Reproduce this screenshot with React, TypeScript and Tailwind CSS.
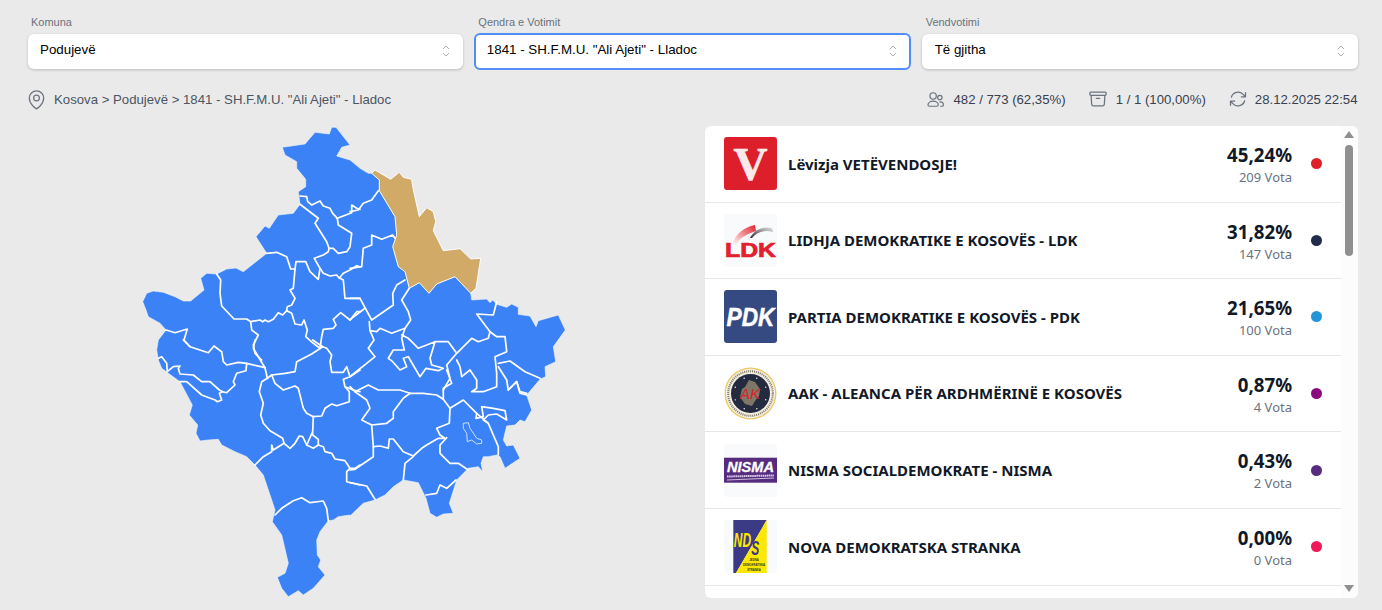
import React from "react";

type P = number[];
const z = (ox: number, oy: number, pts: P, close = false) => {
  let d = "";
  for (let i = 0; i < pts.length; i += 2) {
    const x = ox + pts[i] / 3 - 130;
    const y = oy + pts[i + 1] / 3 - 120;
    d += (i === 0 ? "M" : "L") + x.toFixed(1) + " " + y.toFixed(1) + " ";
  }
  return d + (close ? "Z" : "");
};
const Z3 = (p: P) => z(130, 120, p);
const Z4 = (p: P) => z(350, 160, p);
const Z5 = (p: P) => z(130, 340, p);
const Z6 = (p: P) => z(350, 340, p);

const outline =
  z(130, 120, [457,82,525,72,555,37,598,42,605,22,618,22,660,75,635,82,620,108,660,120,690,145]) +
  z(350, 160, [55,40,65,40,75,30,122,58,148,37,160,52,185,58,188,80,208,170,230,143,250,155,257,185,250,212,280,272,330,266,362,297,392,295,378,385,362,400,365,420,410,417,420,428,428,420,440,433,470,442,485,432,505,442,505,463,540,468,558,500,565,482,625,465,646,510,610,560,617,605,585,620,587,650,570,658,530,705]).replace("M", "L") +
  z(350, 340, [545,210,525,245,510,240,495,255,470,258,460,300,470,318,490,315,510,355,465,385,450,350,440,345,415,350,400,350,393,370,398,395,385,380,355,385,320,420,298,490,310,520,280,522,260,532,240,520,228,475,205,428,160,420,130,440,105,465,75,480,40,490,0,528]).replace("M", "L") +
  z(130, 340, [660,525,625,530,610,540,595,542,570,575,560,600,562,645,572,660,565,680,585,705,550,745,520,765,505,752,475,770,455,745,442,712,465,700,475,670,455,585,427,545,435,510,425,480,400,405,375,375,350,350,315,335,275,315,265,298,235,300,210,303,198,280,203,255,178,225,187,195,150,125,115,100,95,85,85,60,80,30,85,0]).replace("M", "L") +
  z(130, 120, [108,630,90,610,55,590,48,570,38,545,50,520,70,513,100,517,135,530,160,543,182,543,222,510,212,475,230,460,260,462,290,447,318,444,340,455,410,400,378,350,405,318,418,325,445,285,490,280,510,253,505,215,527,200,527,178,500,145,500,125,465,105]).replace("M", "L") +
  "Z";

const tan = z(350, 160, [65,40,75,30,122,58,148,37,160,52,185,58,188,80,208,170,230,143,250,155,257,185,250,212,280,272,330,266,362,297,392,295,378,385,362,400,315,350,260,372,237,400,208,368,178,385,165,335,145,320,128,260,140,225,135,170,88,92,88,60], true);

const borders: string[] = [
  Z3([510,228,530,230,533,245,545,255,570,243,580,258,600,265,608,280,622,295,665,278,665,255,680,265,690,268]),
  Z3([622,295,625,315,665,340,660,380,650,395,625,400,610,385,597,385]),
  Z3([510,253,565,295,555,310,590,365,597,385,595,395,580,405,553,415,570,445,580,460,600,468,620,465,628,475,640,460,660,450,680,437,690,440]),
  Z3([630,475,640,480,645,535,690,535]),
  Z3([410,400,440,397,470,410,482,447,495,447,498,425,527,425,540,455,565,478,570,445]),
  Z3([495,447,490,505,480,510,495,535,485,555,472,560,470,572]),
  Z3([260,462,272,480,270,520,275,558,312,597,350,597,362,605,390,600,398,605,405,600,415,605,430,598,445,578,458,585,470,572]),
  Z3([470,572,485,580,495,612,515,615,522,600,532,630,527,650,550,670,570,685]),
  Z3([570,685,575,650,580,628,610,625,618,615,610,598,632,578,660,600,680,575,690,575]),
  Z3([362,605,365,630,385,645,370,675,375,700,395,720]),
  Z3([108,630,135,638,172,627,162,660,180,680]),
  Z5([160,0,180,20,235,38,252,18,275,35,280,65,290,75,325,67,350,70,405,83,412,115]),
  Z5([350,70,348,92,320,100,310,125,315,135,290,158,278,155,268,150,240,125,215,125,190,105,150,102,145,85,150,78,130,80,112,95,110,70,95,50,85,55]),
  Z5([150,125,170,125,215,165,255,180,262,185,275,180,268,160,278,155]),
  Z5([375,0,370,25,385,50,405,83]),
  Z5([548,0,578,20,545,42,500,65,495,95,465,100,425,105,412,115,395,125,388,155,400,190,392,225,400,250,420,272,458,295,462,310,430,330,425,315,425,335,400,350,375,375]),
  Z5([425,105,435,130,460,150,495,138,505,145,520,205,530,220,550,230,575,228,585,205,605,192,620,197,658,185,658,155,645,140,640,118,660,110,650,80,640,97,605,97,600,65,605,45,590,25,578,20]),
  Z5([550,230,548,275,530,315,550,325,565,315,565,298,548,285,548,275]),
  Z5([462,310,480,325,495,310,508,288,518,290,530,315]),
  Z5([565,315,580,320,585,335,605,340,615,357,645,362,660,385,675,385,690,375]),
  Z5([660,385,650,395,650,425,690,435]),
  Z5([435,525,455,505,490,482,515,473,540,488,580,483,590,505,595,542]),
  Z5([645,140,670,150,690,155]),
  Z5([660,110,690,90]),
  Z4([0,155,25,150,40,130,65,120,85,92]),
  Z4([0,325,35,320,40,265,65,255,65,225,95,238,128,225,135,235]),
  Z4([0,415,30,415,65,480,130,435,128,400,140,375,165,360]),
  Z4([178,385,155,420,175,455,182,480,165,505,125,520,90,505,80,515,60,512,58,485]),
  Z4([45,445,5,475,0,480]),
  Z4([60,512,72,540,55,565,75,590,50,610,25,630,0,650]),
  Z4([165,505,155,535,163,570,130,570,115,595,128,605,150,630,170,620,160,595,175,590,210,650,228,625,265,632,280,625,245,615,240,595,255,545,205,565,185,545,175,535,155,525]),
  Z4([255,545,295,545,320,580,365,535,385,545,415,535,420,515,380,462,430,465,440,425]),
  Z4([320,600,330,620,335,650,360,630,380,660,380,685,365,695,400,695,440,680,440,640,435,590,470,575,465,530,440,530,420,515]),
  Z4([320,580,290,615,300,655,280,690]),
  Z4([445,610,480,603,525,635,570,655]),
  Z4([445,620,470,660,475,690,500,665,510,695,530,700]),
  Z6([0,140,15,155,55,135,85,150,150,150,180,160,220,160,260,165,280,178,300,205,340,180,380,220,415,250,445,320,445,345]),
  Z6([280,178,280,145,305,130,290,90]),
  Z6([180,160,160,175,130,215,130,235,110,250,65,255,35,240,60,205,50,180,15,155]),
  Z6([65,255,70,320,70,350,15,388,0,390]),
  Z6([70,320,90,318,115,325,118,297,130,297,160,335,190,348,215,325,230,315,265,295,285,295,270,285,260,265,298,250,300,205]),
  Z6([190,350,165,370,160,420]),
  Z6([290,293,270,315,270,340,300,370,325,370,355,390]),
  Z6([0,428,50,438,75,478]),
  Z6([318,420,290,445,270,435,260,460,228,465]),
  Z6([380,220,378,235,400,230,395,200,430,205,465,212,470,240,440,222,415,225,400,240,415,250]),
  Z6([475,150,500,125,510,160,530,165]),
];
const lake = z(350, 340, [340,250,355,248,360,265,380,295,395,300,395,310,380,312,365,300,352,305,350,280,340,265], true);

function KosovoMap() {
  return (
    <svg width="450" height="480" viewBox="0 0 450 480" className="block -mt-[6px]">
      <path d={outline} fill="#3b82f6" stroke="#f4f7fb" strokeWidth="0.6" strokeLinejoin="round" />
      {borders.map((d, i) => (
        <path key={i} d={d} fill="none" stroke="#fff" strokeWidth="1.7" strokeLinejoin="round" strokeLinecap="round" />
      ))}
      <path d={lake} fill="none" stroke="#cfe0fb" strokeWidth="1" />
      <path d={tan} fill="#d2aa67" stroke="#fff" strokeWidth="1" strokeLinejoin="round" />
    </svg>
  );
}

const SANS = "'Liberation Sans', sans-serif";

function LogoV() {
  return (
    <svg viewBox="0 0 53 53" className="w-[53px] h-[53px] rounded-[3px] block">
      <rect width="53" height="53" fill="#dd1f2b" />
      <text x="26.5" y="42.5" textAnchor="middle" fontFamily="'Liberation Serif', serif" fontWeight="700" fontSize="47" fill="#fbeaea" stroke="#fbeaea" strokeWidth="0.7">V</text>
    </svg>
  );
}
function LogoLDK() {
  return (
    <svg viewBox="0 0 53 53" className="w-[53px] h-[53px] rounded-[3px] block">
      <defs>
        <linearGradient id="ldkr" x1="0" y1="1" x2="1" y2="0">
          <stop offset="0" stopColor="#fff" />
          <stop offset="1" stopColor="#e3202b" />
        </linearGradient>
        <linearGradient id="ldkg" x1="0" y1="1" x2="1" y2="0">
          <stop offset="0" stopColor="#2f2f2f" />
          <stop offset="1" stopColor="#e4e4e4" />
        </linearGradient>
      </defs>
      <rect width="53" height="53" fill="#f9fafb" />
      <path d="M8 30 C12 20 20 13 31 11 L32 17 C23 20 15 24 12 31 Z" fill="url(#ldkr)" />
      <path d="M26 24 C30 16 38 12 48 14 L49 18 C42 16 34 17 28 24 Z" fill="url(#ldkg)" />
      <text x="26.5" y="42.7" textAnchor="middle" fontFamily={SANS} fontWeight="700" fontSize="21" fill="#e3202b" stroke="#e3202b" strokeWidth="0.7" textLength="51" lengthAdjust="spacingAndGlyphs">LDK</text>
    </svg>
  );
}
function LogoPDK() {
  return (
    <svg viewBox="0 0 53 53" className="w-[53px] h-[53px] rounded-[3px] block">
      <rect width="53" height="53" fill="#364a82" />
      <text transform="translate(26.5,36) scale(1.03,1.2)" textAnchor="middle" fontFamily={SANS} fontWeight="700" fontStyle="italic" fontSize="22" fill="#fff" stroke="#fff" strokeWidth="0.4">PDK</text>
    </svg>
  );
}
function LogoAAK() {
  const dots = [0, 1, 2, 3, 4, 5, 6, 7].map((i) => {
    const a = (i * Math.PI) / 4 + 0.39;
    return [26.5 + 16.5 * Math.cos(a), 26.5 + 16.5 * Math.sin(a)];
  });
  return (
    <svg viewBox="0 0 53 53" className="w-[53px] h-[53px] block">
      <circle cx="26.5" cy="26.5" r="26" fill="#ecc765" />
      <circle cx="26.5" cy="26.5" r="24.7" fill="#f3efe2" />
      <circle cx="26.5" cy="26.5" r="22.3" fill="none" stroke="#7d7660" strokeWidth="2" strokeDasharray="1 1" />
      <circle cx="26.5" cy="26.5" r="19.5" fill="#252b3f" />
      <path d="M25 13 L31 15 L36 22 L35 29 L31 34 L28 39 L21 37 L16 30 L18 22 L21 20 Z" fill="#7f7667" />
      {dots.map(([x, y], i) => (
        <circle key={i} cx={x} cy={y} r="0.7" fill="#fff" />
      ))}
      <text x="26" y="32" textAnchor="middle" fontFamily={SANS} fontStyle="italic" fontSize="15" fill="#d8242c">AK</text>
    </svg>
  );
}
function LogoNisma() {
  return (
    <svg viewBox="0 0 53 53" className="w-[53px] h-[53px] rounded-[3px] block">
      <rect width="53" height="53" fill="#f9fafb" />
      <rect y="13.7" width="53" height="25" fill="#562c7f" />
      <text x="26.5" y="27.7" textAnchor="middle" fontFamily={SANS} fontWeight="700" fontStyle="italic" fontSize="14" fill="#fff" stroke="#fff" strokeWidth="0.3" textLength="47" lengthAdjust="spacingAndGlyphs">NISMA</text>
      <path d="M3 36 L50 34" stroke="#fff" strokeWidth="0.7" />
      <path d="M3 32.5 L50 31.5" stroke="#d9c9e8" strokeWidth="2" strokeDasharray="1.6 0.5" />
    </svg>
  );
}
function LogoNDS() {
  return (
    <svg viewBox="0 0 53 53" className="w-[53px] h-[53px] rounded-[3px] block">
      <rect width="53" height="53" fill="#f9fafb" />
      <polygon points="9.3,0 42.7,0 12,53 9.3,53" fill="#3a3a85" />
      <polygon points="42.7,0 42.7,53 12,53" fill="#ffe800" />
      <text transform="translate(9.8,26.7) scale(0.6,1)" fontFamily={SANS} fontWeight="700" fontStyle="italic" fontSize="20" fill="#ffe800">
        ND<tspan dy="8.3" fill="#3a3a85">S</tspan>
      </text>
      <text x="30" y="40.5" textAnchor="middle" fontFamily={SANS} fontWeight="700" fontSize="2.8" fill="#333">JEDNA</text>
      <text x="30" y="45.5" textAnchor="middle" fontFamily={SANS} fontWeight="700" fontSize="2.8" fill="#333">DEMOKRATSKA</text>
      <text x="30" y="50.5" textAnchor="middle" fontFamily={SANS} fontWeight="700" fontSize="2.8" fill="#333">STRANKA</text>
    </svg>
  );
}

const parties = [
  { logo: <LogoV />, name: "Lëvizja VETËVENDOSJE!", pct: "45,24%", votes: "209 Vota", dot: "bg-[#e01f2b]" },
  { logo: <LogoLDK />, name: "LIDHJA DEMOKRATIKE E KOSOVËS - LDK", pct: "31,82%", votes: "147 Vota", dot: "bg-[#232b4a]" },
  { logo: <LogoPDK />, name: "PARTIA DEMOKRATIKE E KOSOVËS - PDK", pct: "21,65%", votes: "100 Vota", dot: "bg-[#2495d8]" },
  { logo: <LogoAAK />, name: "AAK - ALEANCA PËR ARDHMËRINË E KOSOVËS", pct: "0,87%", votes: "4 Vota", dot: "bg-[#8b0a7f]" },
  { logo: <LogoNisma />, name: "NISMA SOCIALDEMOKRATE - NISMA", pct: "0,43%", votes: "2 Vota", dot: "bg-[#562c7f]" },
  { logo: <LogoNDS />, name: "NOVA DEMOKRATSKA STRANKA", pct: "0,00%", votes: "0 Vota", dot: "bg-[#f0195a]" },
];

function Icon({ size, sw = 1.5, children }: { size: number; sw?: number; children: React.ReactNode }) {
  return (
    <svg width={size} height={size} viewBox="0 0 24 24" fill="none" stroke="currentColor" strokeWidth={sw} strokeLinecap="round" strokeLinejoin="round" className="text-[#6b7280] shrink-0">
      {children}
    </svg>
  );
}

function Select({ label, value, active }: { label: string; value: string; active?: boolean }) {
  return (
    <div>
      <div className="text-[11px] leading-[16px] text-[#6b7280] pl-[3.5px] mb-[3.5px]">{label}</div>
      <div
        className={
          active
            ? "h-[37px] -my-px -mx-px flex items-center justify-between rounded-[6px] bg-white border-2 border-[#4f8ef7] pl-[11px] pr-[7px] pb-[2px]"
            : "h-[35px] flex items-center justify-between rounded-[6px] bg-white pl-[12.5px] pr-[8px] pb-[2px] shadow-[0_1px_3px_rgba(0,0,0,0.2)]"
        }
      >
        <span className="text-[13.33px] text-black">{value}</span>
        <span className="mt-[2px]">
          <Icon size={18}>
            <path strokeWidth="1.2" stroke="#9ca3af" d="M8.25 15 12 18.75 15.75 15m-7.5-6L12 5.25 15.75 9" />
          </Icon>
        </span>
      </div>
    </div>
  );
}

export default function App() {
  return (
    <div className="w-[1382px] h-[610px] overflow-hidden bg-[#eaeaea] pl-[27.5px] pr-[24.5px] pt-[14px] font-['Liberation_Sans',sans-serif]">
      <div className="grid grid-cols-3 gap-3">
        <Select label="Komuna" value="Podujevë" />
        <Select label="Qendra e Votimit" value={'1841 - SH.F.M.U. "Ali Ajeti" - Lladoc'} active />
        <Select label="Vendvotimi" value="Të gjitha" />
      </div>
      <div className="mt-[20.5px] h-[20px] flex items-center justify-between text-[13.2px]">
        <div className="flex items-center gap-[6px] -ml-[2.5px] text-[#4b5563]">
          <Icon size={23} sw={1.3}>
            <path d="M15 10.5a3 3 0 1 1-6 0 3 3 0 0 1 6 0Z" />
            <path d="M19.5 10.5c0 7.142-7.5 11.25-7.5 11.25S4.5 17.642 4.5 10.5a7.5 7.5 0 1 1 15 0Z" />
          </Icon>
          <span className="pt-[1px]">Kosova &gt; Podujevë &gt; 1841 - SH.F.M.U. "Ali Ajeti" - Lladoc</span>
        </div>
        <div className="flex items-center gap-[22px] text-[#374151]">
          <div className="flex items-center gap-[8px]">
            <Icon size={19}>
              <circle cx="9" cy="7.5" r="4" />
              <path d="M2.5 19c0-3 3-5 6.5-5s6.5 2 6.5 5c0 1-1 1.5-2 1.5H4.5c-1 0-2-.5-2-1.5Z" />
              <circle cx="17.5" cy="9.5" r="2.8" />
              <path d="M17.5 15c2.5 0 4.5 1.5 4.5 3.5 0 1.2-1 2-2 2h-1.5" />
            </Icon>
            <span className="pt-[1px]">482 / 773 (62,35%)</span>
          </div>
          <div className="flex items-center gap-[8px]">
            <Icon size={20}>
              <path d="m20.25 7.5-.625 10.632a2.25 2.25 0 0 1-2.247 2.118H6.622a2.25 2.25 0 0 1-2.247-2.118L3.75 7.5M10 11.25h4M3.375 7.5h17.25c.621 0 1.125-.504 1.125-1.125v-1.5c0-.621-.504-1.125-1.125-1.125H3.375c-.621 0-1.125.504-1.125 1.125v1.5c0 .621.504 1.125 1.125 1.125Z" />
            </Icon>
            <span className="pt-[1px]">1 / 1 (100,00%)</span>
          </div>
          <div className="flex items-center gap-[7px]">
            <Icon size={20}>
              <path d="M16.023 9.348h4.992M2.985 19.644v-4.992m0 0h4.992m-4.993 0 3.181 3.183a8.25 8.25 0 0 0 13.803-3.7M4.031 9.865a8.25 8.25 0 0 1 13.803-3.7l3.181 3.182m0-4.991v4.99" />
            </Icon>
            <span className="pt-[1px]">28.12.2025 22:54</span>
          </div>
        </div>
      </div>
      <div className="mt-[17px] flex">
        <div className="w-[677.5px] pl-[102.5px] shrink-0">
          <KosovoMap />
        </div>
        <div className="flex-1 h-[472px] bg-white rounded-[6px] flex overflow-hidden">
          <div className="flex-1 min-w-0">
            {parties.map((p) => (
              <div key={p.name} className="h-[76.6px] border-b border-[#e5e7eb] flex items-center pl-[19px] pr-[19px]">
                <div className="shrink-0">{p.logo}</div>
                <div className="ml-[11px] flex-1 text-[15px] font-bold text-[#111827] font-['Noto_Sans',sans-serif]">{p.name}</div>
                <div className="text-right pt-[1.5px] font-['Noto_Sans',sans-serif]">
                  <div className="text-[18.7px] leading-[25px] font-bold text-[#111827]">{p.pct}</div>
                  <div className="text-[13px] leading-[20px] text-[#6b7280]">{p.votes}</div>
                </div>
                <div className={"ml-[19px] w-[11px] h-[11px] rounded-full " + p.dot} />
              </div>
            ))}
          </div>
          <div className="w-[16.5px] bg-[#fcfcfc] flex flex-col items-center justify-between shrink-0 pt-[5px] pb-[6px]">
            <div className="flex flex-col items-center gap-[7px]">
              <svg width="10" height="7" viewBox="0 0 10 7"><polygon points="5,0 10,7 0,7" fill="#8f8f8f" /></svg>
              <div className="w-[8px] h-[111px] rounded-full bg-[#8f8f8f]" />
            </div>
            <svg width="10" height="7" viewBox="0 0 10 7"><polygon points="0,0 10,0 5,7" fill="#8f8f8f" /></svg>
          </div>
        </div>
      </div>
    </div>
  );
}
